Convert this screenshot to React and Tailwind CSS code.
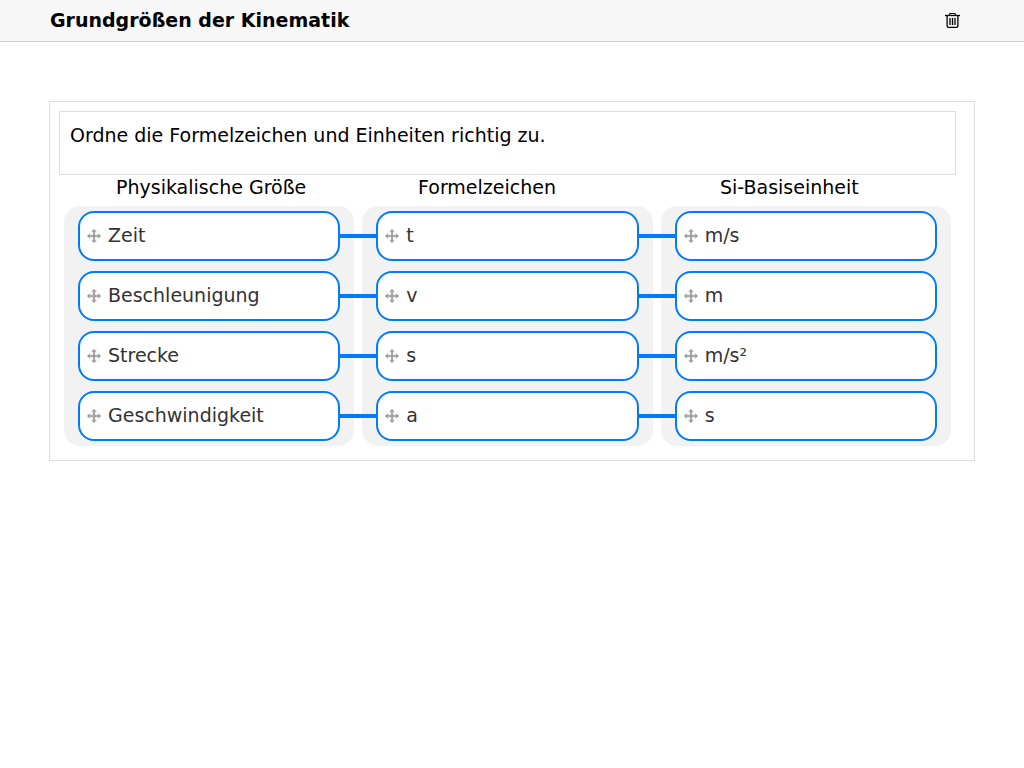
import React from "react";

const headings = ["Physikalische Größe", "Formelzeichen", "Si-Basiseinheit"];

const columns = [
  ["Zeit", "Beschleunigung", "Strecke", "Geschwindigkeit"],
  ["t", "v", "s", "a"],
  ["m/s", "m", "m/s²", "s"],
];

function MoveIcon() {
  return (
    <svg
      viewBox="0 0 14 14"
      className="size-3.5 shrink-0"
      fill="#999999"
      stroke="#999999"
      strokeWidth="0.4"
      strokeLinejoin="round"
      aria-hidden="true"
    >
      <path d="M7 .2L9.3 2.6H7.8v3.6h3.6V4.7L13.8 7l-2.4 2.3V7.8H7.8v3.6h1.5L7 13.8l-2.3-2.4h1.5V7.8H2.6v1.5L.2 7l2.4-2.3v1.5h3.6V2.6H4.7z" />
    </svg>
  );
}

function TrashIcon() {
  return (
    <svg viewBox="0 0 16 16" className="size-4" fill="none" stroke="#000000" aria-hidden="true">
      <path d="M1 3.5h15" strokeWidth="1.3" />
      <path d="M5.5 3.2V2.4q0-.9 1-.9h4q1 0 1 .9v.8" strokeWidth="1.2" />
      <path d="M3.1 3.8v10q0 1.6 1.6 1.6h7.6q1.6 0 1.6-1.6v-10" strokeWidth="1.3" />
      <path d="M6 6v7M8.5 6v7M11 6v7" strokeWidth="1.3" />
    </svg>
  );
}

function Card({ label, linked }) {
  return (
    <li className="relative flex h-[50px] cursor-move items-center gap-[7px] rounded-2xl border-2 border-[#007bff] bg-white pl-[7px] text-[#333333]">
      <MoveIcon />
      <span className="pb-0.5">{label}</span>
      {linked && <span className="absolute top-[21px] left-full z-10 h-1 w-10 bg-[#007bff]" />}
    </li>
  );
}

export default function App() {
  return (
    <div className="min-h-screen bg-white font-['DejaVu_Sans',sans-serif] text-[19px] leading-6 text-black">
      <header className="flex h-[42px] items-center justify-between border-b border-[#cccccc] bg-[#f7f7f7] pr-16 pb-0.5 pl-[50px]">
        <h1 className="font-bold">Grundgrößen der Kinematik</h1>
        <button type="button" aria-label="Löschen" className="cursor-pointer">
          <TrashIcon />
        </button>
      </header>
      <main className="mx-[49px] mt-[59px] border border-[#dddddd] px-[9px] pt-[9px] pb-3.5">
        <p className="mr-[9px] min-h-16 border border-[#dddddd] px-2.5 pt-[11px]">
          Ordne die Formelzeichen und Einheiten richtig zu.
        </p>
        <div className="grid h-[31px] grid-cols-3">
          {headings.map((heading) => (
            <h2 key={heading} className="pl-[57px]">{heading}</h2>
          ))}
        </div>
        <div className="mr-3.5 ml-[5px] grid grid-cols-3 gap-2">
          {columns.map((items, index) => (
            <ul key={headings[index]} className="flex flex-col gap-2.5 rounded-2xl bg-[#f2f2f2] px-3.5 py-[5px]">
              {items.map((item) => (
                <Card key={item} label={item} linked={index < columns.length - 1} />
              ))}
            </ul>
          ))}
        </div>
      </main>
    </div>
  );
}
